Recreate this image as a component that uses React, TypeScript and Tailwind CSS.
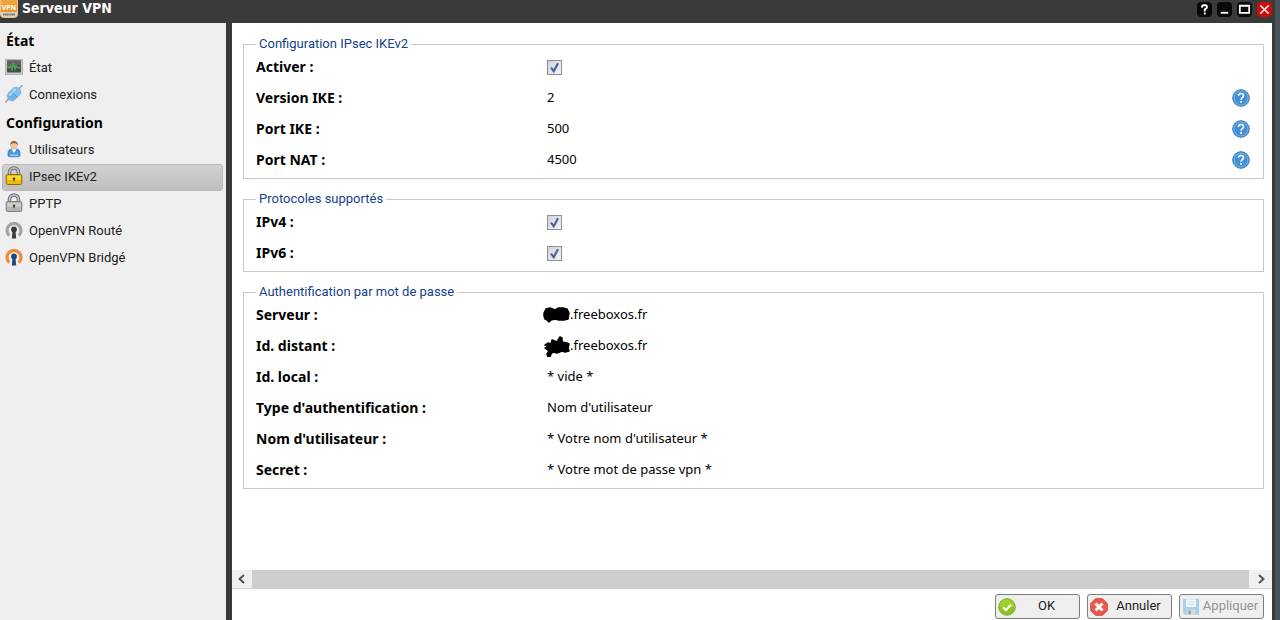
import type { ReactNode } from 'react';

function VpnLogo() {
  return (
    <svg viewBox="0 0 18 18" className="h-[18px] w-[18px] shrink-0" aria-hidden="true">
      <defs>
        <linearGradient id="logo" x1="0" y1="0" x2="0" y2="1">
          <stop offset="0" stopColor="#f2a94a" />
          <stop offset="1" stopColor="#f08c0c" />
        </linearGradient>
      </defs>
      <rect x="0.5" y="-2" width="17" height="19.500" rx="3" fill="url(#logo)" stroke="#e9c79a" />
      <path d="M1 12h16v2.5a2.5 2.5 0 0 1-2.5 2.5h-11A2.5 2.5 0 0 1 1 14.500z" fill="#d9d3c8" />
      <text x="9" y="9.500" textAnchor="middle" fontSize="7" fontWeight="700" fill="#fff" fontFamily="Noto Sans, sans-serif">VPN</text>
      <path d="M3 14.500h12" stroke="#77716a" strokeWidth="2" strokeDasharray="1.400 0.400" />
    </svg>
  );
}

function StatusIcon() {
  return (
    <svg viewBox="0 0 18 16" className="h-4 w-[18px]" aria-hidden="true">
      <rect x="0.5" y="0.5" width="17" height="15" fill="#c9c9c9" stroke="#b4b4b4" />
      <rect x="2" y="1.500" width="14" height="12" fill="#4a4a4e" />
      <path d="M2 1.500h14v4L2 9z" fill="#626266" />
      <path d="M2.500 8.500h2l1-2 1.500 4 1.500-6.500 1.500 6 1-3 1 1.500h3.500" fill="none" stroke="#3fae4c" strokeWidth="1.300" />
    </svg>
  );
}

function PlugIcon() {
  return (
    <svg viewBox="0 0 18 18" className="h-[18px] w-[18px]" aria-hidden="true">
      <path d="M0.800 16.800 4.500 13M13 5l4-4.500" stroke="#a9a9a9" strokeWidth="1.800" strokeLinecap="round" />
      <g transform="rotate(-45 9 9)">
        <rect x="1.500" y="4.300" width="15" height="9.400" rx="4.200" fill="#6db4ea" stroke="#8fb6d8" strokeWidth="0.700" />
        <path d="M9 4.300h3.300a4.200 4.200 0 0 1 4.200 4.200v1a4.200 4.200 0 0 1-4.200 4.200H9z" fill="#7fc0f2" />
        <path d="M9 4.800v8.400" stroke="#4a98d4" strokeWidth="0.900" />
        <path d="M5 6.700h8" stroke="#b9dff9" strokeWidth="1.600" strokeLinecap="round" />
      </g>
    </svg>
  );
}

function UserIcon() {
  return (
    <svg viewBox="0 0 18 18" className="h-[18px] w-[18px]" aria-hidden="true">
      <path d="M3 15.500V13c0-2.500 1.800-4 4-4h4c2.200 0 4 1.500 4 4v2.500c0 .900-1.200 1.300-2 1.300H5c-.800 0-2-.400-2-1.300z" fill="#4d96e0" stroke="#2f6fb9" strokeWidth="0.700" />
      <path d="M6.500 9.300 9 13l2.500-3.700z" fill="#fff" />
      <path d="M5 15.200h8" stroke="#9fcbf5" strokeWidth="1.500" />
      <circle cx="9" cy="5.300" r="3.600" fill="#f3c69b" />
      <path d="M5.200 5.500C5 2.500 6.500.900 9 .900s4 1.600 3.800 4.600c-.800-1.700-1.500-2.200-3.800-2.200s-3 .500-3.800 2.200z" fill="#94602c" />
    </svg>
  );
}

function LockIcon({ gold }: { gold?: boolean }) {
  return (
    <svg viewBox="0 0 18 20" className="h-5 w-[18px]" aria-hidden="true">
      <path d="M4.500 10V6.500a4.500 4.500 0 0 1 9 0V10" fill="none" stroke="#707274" strokeWidth="3.600" />
      <path d="M4.500 10V6.500a4.500 4.500 0 0 1 9 0V10" fill="none" stroke="#c2c4c6" strokeWidth="1.600" />
      <rect x="1.200" y="8.500" width="15.600" height="10" rx="1.500" fill={gold ? '#f3b90a' : '#b4b4b4'} stroke={gold ? '#8b6a10' : '#808080'} />
      <path d="M2.300 10h13.400v4H2.300z" fill={gold ? '#ffd82e' : '#cdcdcd'} />
      <circle cx="9" cy="12.700" r="1.300" fill="#4d4218" />
      <path d="M9 12.700v2.600" stroke="#4d4218" strokeWidth="1.200" />
    </svg>
  );
}

function OpenVpnIcon({ orange }: { orange?: boolean }) {
  return (
    <svg viewBox="0 0 18 18" className="h-[18px] w-[18px]" aria-hidden="true">
      <path d="M4.300 14.600A7 7 0 1 1 13.700 14.600" fill="none" stroke={orange ? '#f5893a' : '#a3a3a3'} strokeWidth="3.200" />
      <circle cx="9" cy="8.500" r="2.900" fill={orange ? '#1c4a7e' : '#3d3d3d'} />
      <path d="M7.600 9h2.800l.800 8.500H6.800z" fill={orange ? '#1c4a7e' : '#3d3d3d'} />
    </svg>
  );
}

function OkIcon() {
  return (
    <svg viewBox="0 0 18 18" className="h-[18px] w-[18px]" aria-hidden="true">
      <circle cx="9" cy="9" r="8.300" fill="#8fc31f" stroke="#7fae3a" />
      <path d="M1.500 9a7.500 7.500 0 0 1 15 0c-5-1.500-10-1.500-15 0z" fill="#a0d028" />
      <path d="m5 9.200 3 2.800 5-5.200" fill="none" stroke="#fff" strokeWidth="2.300" />
    </svg>
  );
}

function CancelIcon() {
  return (
    <svg viewBox="0 0 18 18" className="h-[18px] w-[18px]" aria-hidden="true">
      <path d="M5.500.700h7l4.800 4.800v7l-4.800 4.800h-7L.700 12.500v-7z" fill="#e9594a" stroke="#d2503f" />
      <path d="m5.500 5.500 7 7m0-7-7 7" stroke="#fff" strokeWidth="2.900" />
    </svg>
  );
}

function SaveIcon() {
  return (
    <svg viewBox="0 0 18 18" className="h-[18px] w-[18px]" aria-hidden="true">
      <path d="M1 1h16v16H3l-2-2z" fill="#a5d1ea" />
      <path d="M4 1.500h10V9H4z" fill="#f5f7f8" />
      <path d="M5.500 4h7m-7 2.500h7" stroke="#cfdbe2" />
      <path d="M5 11.500h8.500V17H5z" fill="#d9dcde" />
      <path d="M6.500 12.500h2.300V16H6.500z" fill="#87949c" />
    </svg>
  );
}

function HelpIcon() {
  return (
    <svg viewBox="0 0 18 18" className="block h-[18px] w-[18px]" aria-hidden="true">
      <circle cx="9" cy="9" r="8.300" fill="#418fd6" stroke="#3a78b8" />
      <circle cx="9" cy="9" r="7" fill="none" stroke="#83b9e8" strokeWidth="0.900" />
      <path d="M6.500 6.800C6.500 5.200 7.600 4.500 9 4.500s2.500.800 2.500 2.200c0 1.800-2.400 1.900-2.400 4" fill="none" stroke="#fff" strokeWidth="1.600" />
      <path d="M8.200 12h1.800v1.700H8.200z" fill="#fff" />
    </svg>
  );
}

function Redaction({ tall }: { tall?: boolean }) {
  return (
    <svg viewBox="0 0 27 22" className="-ml-1 h-[22px] w-[27px] shrink-0" aria-hidden="true">
      {tall ? (
        <path d="M2 10 5 8l3 1 1-4 5 2 3-5 2 1v4l5 1 2 1-1 4 1 3-4 1-3-1-5 2-4-1-2 2-1 3-2 0-1-3 2-3-4-3 3-2z" fill="#000" stroke="#000" strokeWidth="1.500" strokeLinejoin="round" />
      ) : (
        <path d="m1 9 2-4 4-1 5 2 3-2 5 0 4 1 2 4-1 6-4 1-5 0-4-1-4 1-2 2-2-2-2-1-1-3z" fill="#000" stroke="#000" strokeWidth="1.500" strokeLinejoin="round" />
      )}
    </svg>
  );
}

function WindowButton({ label, danger, children }: { label: string; danger?: boolean; children: ReactNode }) {
  return (
    <button
      type="button"
      aria-label={label}
      className={
        danger
          ? 'flex h-[15px] w-[15px] items-center justify-center rounded-sm bg-[#c80d0d] text-white'
          : 'flex h-[15px] w-[15px] items-center justify-center rounded-sm bg-[#0a0a0a] text-white'
      }
    >
      <svg viewBox="0 0 16 16" className="h-[15px] w-[15px]" fill="none" stroke="currentColor" aria-hidden="true">
        {children}
      </svg>
    </button>
  );
}

function NavHeading({ children }: { children: ReactNode }) {
  return <h2 className="flex h-7 items-center pl-1.5 font-bold text-black">{children}</h2>;
}

function NavItem({ icon, label, selected }: { icon: ReactNode; label: string; selected?: boolean }) {
  return (
    <a
      href="#"
      aria-current={selected ? 'page' : undefined}
      className={
        selected
          ? "mr-[3px] ml-0.5 flex h-[27px] items-center gap-1.5 rounded-[3px] border border-[#b9b9b9] bg-gradient-to-b from-[#d2d2d2] to-[#bfbfbf] pl-0.5 font-['Roboto',sans-serif] text-[13px]"
          : "mr-[3px] ml-0.5 flex h-[27px] items-center gap-1.5 rounded-[3px] border border-transparent pl-0.5 font-['Roboto',sans-serif] text-[13px]"
      }
    >
      <span className="flex w-[18px] shrink-0 justify-center pb-[3px]">{icon}</span>
      {label}
    </a>
  );
}

function Group({ title, children }: { title: string; children: ReactNode }) {
  return (
    <fieldset className="min-w-0 border border-[#c8c8c8] px-3 pb-0.5">
      <legend className="px-[3px] font-['Roboto',sans-serif] text-[13px] leading-4 text-[#15428b]">{title}</legend>
      {children}
    </fieldset>
  );
}

function Row({ label, help, children }: { label: string; help?: boolean; children: ReactNode }) {
  return (
    <div className="flex h-[31px] items-center pb-0.5">
      <span className="w-[291px] shrink-0 font-bold text-black">{label}</span>
      <span className="flex flex-1 items-center text-[13px] text-black">{children}</span>
      {help && (
        <button type="button" aria-label="Aide" className="mr-px shrink-0">
          <HelpIcon />
        </button>
      )}
    </div>
  );
}

function CheckRow({ id, label }: { id: string; label: string }) {
  return (
    <div className="flex h-[31px] items-center">
      <label htmlFor={id} className="w-[291px] shrink-0 pb-0.5 font-bold text-black">{label}</label>
      <span className="grid">
        <input
          id={id}
          type="checkbox"
          defaultChecked
          className="peer col-start-1 row-start-1 h-[15px] w-[15px] appearance-none border border-[#8f8f8f] bg-gradient-to-br from-[#cfd3da] to-[#f4f4f4]"
        />
        <svg viewBox="0 0 15 15" className="pointer-events-none invisible col-start-1 row-start-1 h-[15px] w-[15px] peer-checked:visible" aria-hidden="true">
          <path d="m4 7.500 2.700 3.700L11 3.300" fill="none" stroke="#4a5f9f" strokeWidth="2.100" />
        </svg>
      </span>
    </div>
  );
}

function ActionButton({ icon, label, disabled }: { icon: ReactNode; label: string; disabled?: boolean }) {
  return (
    <button
      type="button"
      disabled={disabled}
      className="flex h-[25px] w-[85px] items-center rounded-[3px] border border-[#7d7d7d] bg-[#efefef] px-0.5 font-['Roboto',sans-serif] text-[13px] text-[#222] disabled:text-[#949494]"
    >
      <span className="shrink-0">{icon}</span>
      <span className="flex-1 text-center">{label}</span>
    </button>
  );
}

export default function App() {
  return (
    <div className="flex h-screen overflow-hidden bg-[#49535c] pr-[5px] font-['Noto_Sans','DejaVu_Sans',sans-serif] text-sm text-[#222]">
      <div className="flex min-w-0 flex-1 flex-col bg-[#3a3a3a] pr-[3px]">
        <header className="flex h-[23px] shrink-0 items-start gap-1">
          <VpnLogo />
          <h1 className="flex-1 font-['DejaVu_Sans_Condensed','DejaVu_Sans',sans-serif] text-sm leading-[17px] font-bold text-white">Serveur VPN</h1>
          <div className="flex gap-[5px] pt-0.5">
            <WindowButton label="Aide">
              <path d="M5.500 6V4.500L6.500 3.500h3l1 1V6L8.300 8v2" strokeWidth="2" />
              <path d="M7.300 11.300h2v2h-2z" fill="currentColor" stroke="none" />
            </WindowButton>
            <WindowButton label="Réduire"><path d="M4 11.500h8" strokeWidth="2" /></WindowButton>
            <WindowButton label="Agrandir"><path d="M3 4h10v7.500H3z" strokeWidth="1.900" /></WindowButton>
            <WindowButton label="Fermer" danger><path d="m3.500 3.500 9 9m0-9-9 9" strokeWidth="1.800" stroke="#fbd3d3" /></WindowButton>
          </div>
        </header>

        <div className="flex min-h-0 flex-1">
          <nav className="w-[226px] shrink-0 bg-[#efefef] pt-1">
            <NavHeading>État</NavHeading>
            <NavItem icon={<StatusIcon />} label="État" />
            <NavItem icon={<PlugIcon />} label="Connexions" />
            <NavHeading>Configuration</NavHeading>
            <NavItem icon={<UserIcon />} label="Utilisateurs" />
            <NavItem icon={<LockIcon gold />} label="IPsec IKEv2" selected />
            <NavItem icon={<LockIcon />} label="PPTP" />
            <NavItem icon={<OpenVpnIcon />} label="OpenVPN Routé" />
            <NavItem icon={<OpenVpnIcon orange />} label="OpenVPN Bridgé" />
          </nav>

          <main className="ml-1.5 flex min-w-0 flex-1 flex-col bg-white">
            <form className="flex min-h-0 flex-1 flex-col gap-3 overflow-hidden pt-[13px] pr-2 pl-[11px]">
              <Group title="Configuration IPsec IKEv2">
                <CheckRow id="enable" label="Activer :" />
                <Row label="Version IKE :" help>2</Row>
                <Row label="Port IKE :" help>500</Row>
                <Row label="Port NAT :" help>4500</Row>
              </Group>
              <Group title="Protocoles supportés">
                <CheckRow id="ipv4" label="IPv4 :" />
                <CheckRow id="ipv6" label="IPv6 :" />
              </Group>
              <Group title="Authentification par mot de passe">
                <Row label="Serveur :"><Redaction />.freeboxos.fr</Row>
                <Row label="Id. distant :"><Redaction tall />.freeboxos.fr</Row>
                <Row label="Id. local :">* vide *</Row>
                <Row label="Type d'authentification :">Nom d'utilisateur</Row>
                <Row label="Nom d'utilisateur :">* Votre nom d'utilisateur *</Row>
                <Row label="Secret :">* Votre mot de passe vpn *</Row>
              </Group>
            </form>

            <div className="flex h-[18px] shrink-0 bg-[#f0f0f0]">
              <button type="button" aria-label="Défiler à gauche" className="flex w-5 items-center justify-center">
                <svg viewBox="0 0 10 10" className="h-2.5 w-2.5" aria-hidden="true"><path d="M7 1 2.500 5 7 9" fill="none" stroke="#505050" strokeWidth="1.900" /></svg>
              </button>
              <div className="flex-1 bg-[#cdcdcd]" />
              <button type="button" aria-label="Défiler à droite" className="flex w-[23px] items-center justify-center">
                <svg viewBox="0 0 10 10" className="h-2.5 w-2.5" aria-hidden="true"><path d="M3 1 7.500 5 3 9" fill="none" stroke="#505050" strokeWidth="1.900" /></svg>
              </button>
            </div>

            <footer className="flex h-8 shrink-0 items-start justify-end gap-[7px] border-t border-[#d0d0d0] pt-[5px] pr-2">
              <ActionButton icon={<OkIcon />} label="OK" />
              <ActionButton icon={<CancelIcon />} label="Annuler" />
              <ActionButton icon={<SaveIcon />} label="Appliquer" disabled />
            </footer>
          </main>
        </div>
      </div>
    </div>
  );
}
